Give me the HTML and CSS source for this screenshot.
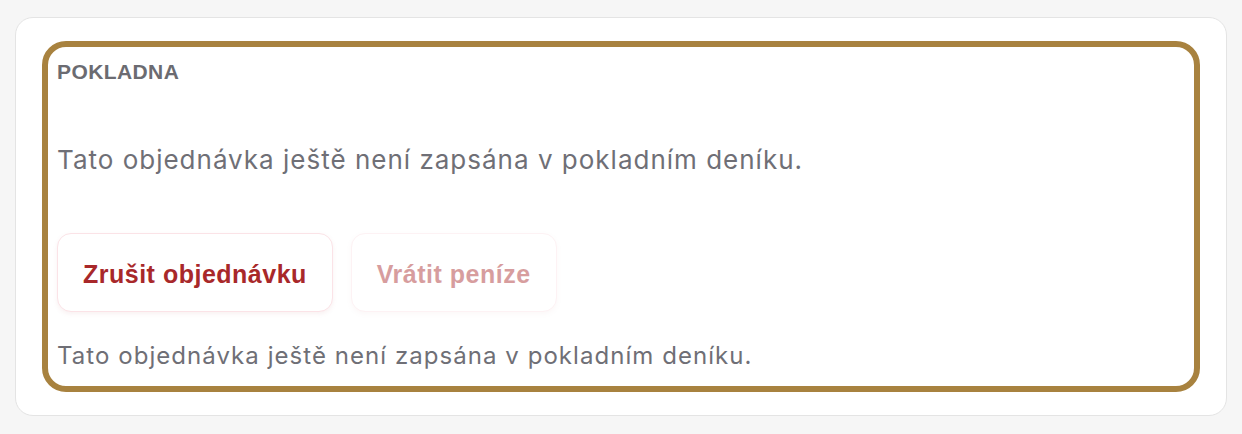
FILE: index.html
```html
<!DOCTYPE html>
<html lang="cs">
<head>
<meta charset="utf-8">
<title>Pokladna</title>
<link rel="stylesheet" href="styles.css">
</head>
<body>
<div class="card">
  <section class="cash">
    <h2 class="cash-title">POKLADNA</h2>
    <p class="cash-note">Tato objednávka ještě není zapsána v pokladním deníku.</p>
    <div class="actions">
      <button class="btn">Zrušit objednávku</button>
      <button class="btn btn-disabled" disabled>Vrátit peníze</button>
    </div>
    <p class="cash-foot">Tato objednávka ještě není zapsána v pokladním deníku.</p>
  </section>
</div>
</body>
</html>
```
FILE: styles.css
```css
html, body {
  margin: 0;
  padding: 0;
  background: #f6f6f6;
}
body {
  padding: 17px 15px 18px;
  font-family: Inter, "Liberation Sans", sans-serif;
}
.card {
  background: #fff;
  border: 1px solid #e4e4e4;
  border-radius: 18px;
  padding: 23px 26px;
}
.cash {
  border: 6px solid #a8823f;
  border-radius: 24px;
  padding: 13px 9px 16px;
}
.cash-title {
  margin: 0;
  font-family: "Liberation Sans", Arial, sans-serif;
  font-weight: 700;
  font-size: 21px;
  letter-spacing: 0.4px;
  line-height: 24px;
  color: #6b6b71;
}
.cash-note {
  margin: 61px 0 0;
  font-size: 26px;
  letter-spacing: 1px;
  line-height: 30px;
  color: #6f6f76;
}
.actions {
  display: flex;
  gap: 18px;
  margin-top: 58px;
}
.btn {
  font-family: "Liberation Sans", Arial, sans-serif;
  font-weight: 700;
  font-size: 25px;
  letter-spacing: 0.5px;
  line-height: 27px;
  color: #a8282a;
  background: #fff;
  border: 1px solid #fbe3e7;
  border-radius: 14px;
  padding: 27px 25px 23px;
  box-shadow: 0 2px 4px rgba(200, 120, 130, 0.1);
  cursor: pointer;
}
.btn-disabled {
  opacity: 0.45;
  cursor: default;
}
.cash-foot {
  margin: 30px 0 0;
  font-size: 24px;
  letter-spacing: 1.05px;
  line-height: 28px;
  color: #6f6f76;
}
```
